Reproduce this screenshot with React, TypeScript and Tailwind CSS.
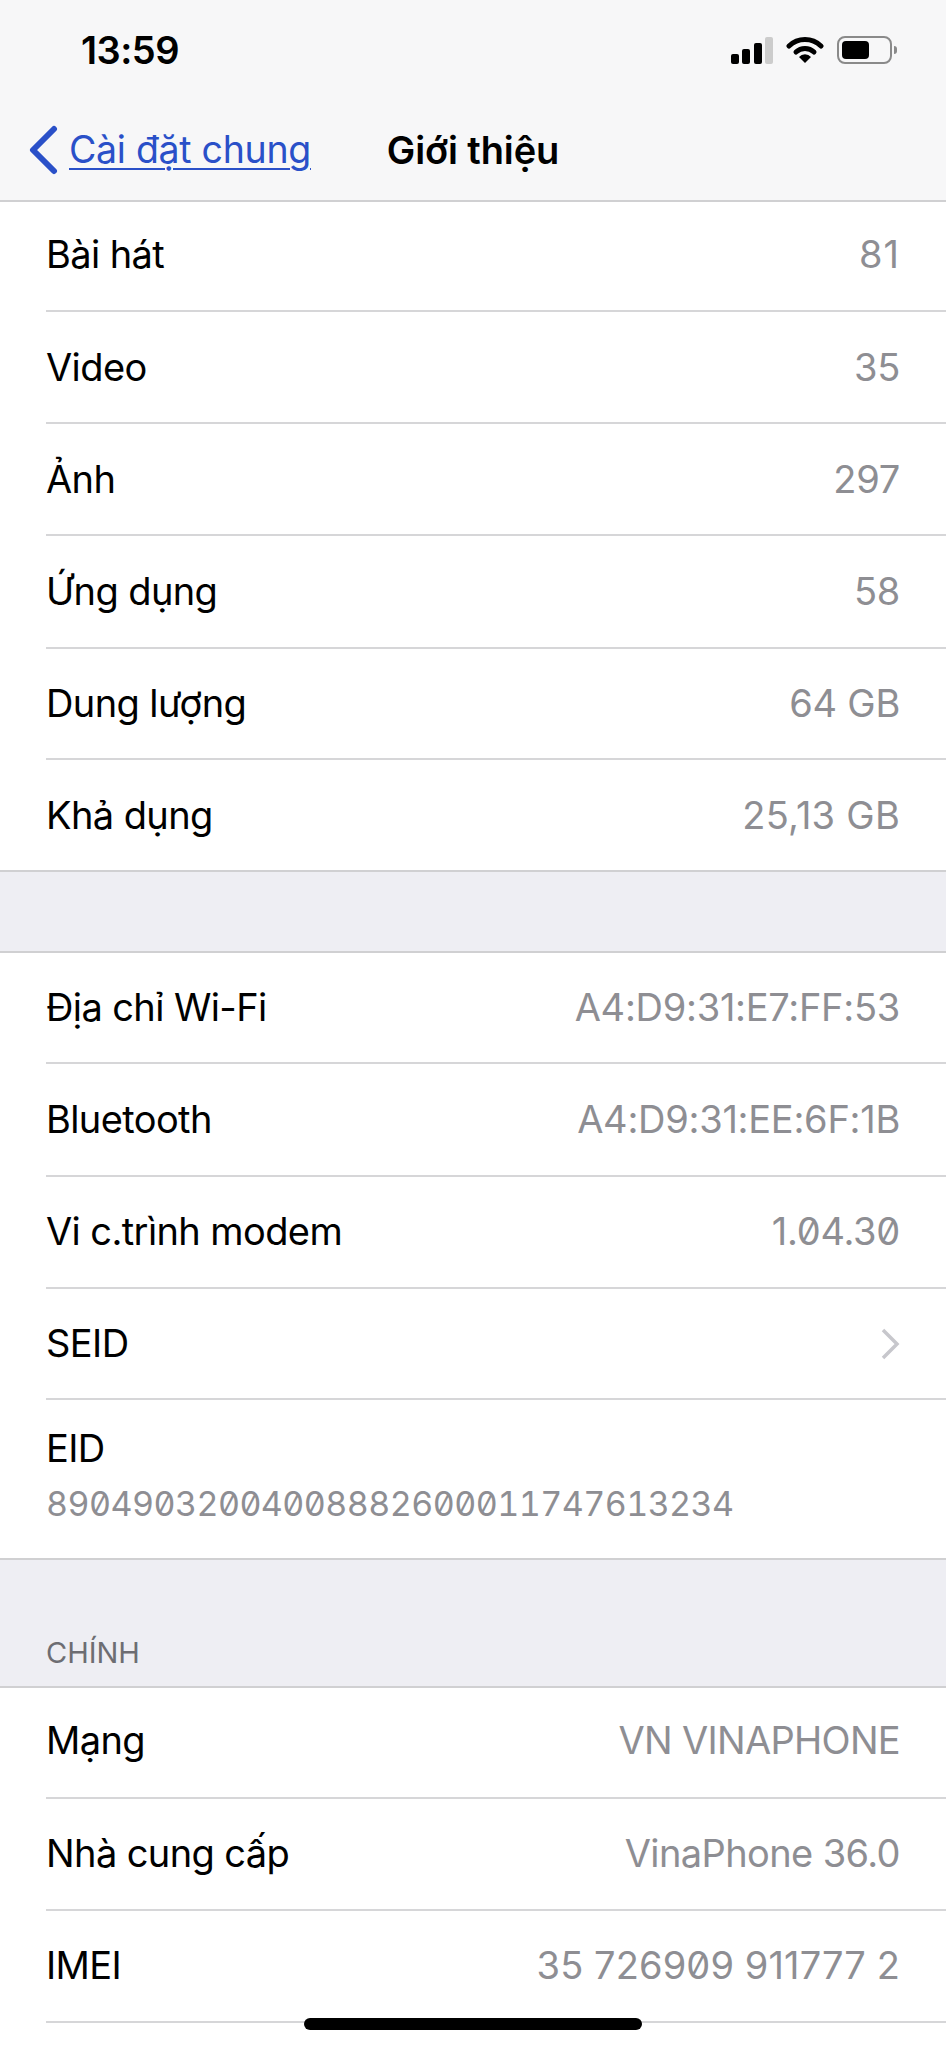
import React from 'react';

interface RowProps {
  label: string;
  value?: string;
  height: string;
  last?: boolean;
  chevron?: boolean;
  plainZero?: boolean;
  textPad?: string;
  valueClass?: string;
}

function Row({ label, value, height, last, chevron, plainZero, textPad = '', valueClass = 'tracking-[-0.27px]' }: RowProps) {
  return (
    <div className={`pl-[46px] ${height}`}>
      <div className={`flex h-full items-center justify-between pr-[46px] ${textPad} ${last ? '' : 'border-b-2 border-[#d6d6d8]'}`}>
        <span className="text-[38px] tracking-[-0.6px] text-black">{label}</span>
        {value && <span className={`text-[38px] text-[#8e8e93] ${valueClass} ${plainZero ? '' : 'slashed-zero'}`}>{value}</span>}
        {chevron && (
          <svg width="20" height="32" viewBox="0 0 20 32">
            <path d="M3 2 L17 16 L3 30" fill="none" stroke="#c7c7cc" strokeWidth="3.5" />
          </svg>
        )}
      </div>
    </div>
  );
}

function StatusIcons() {
  return (
    <div className="flex items-center">
      <svg width="42" height="28" viewBox="0 0 42 28" className="mr-[13px]">
        <rect x="0" y="18" width="8" height="10" rx="2" fill="#000" />
        <rect x="11" y="13" width="8" height="15" rx="2" fill="#000" />
        <rect x="23" y="7" width="8" height="21" rx="2" fill="#000" />
        <rect x="34" y="1" width="8" height="27" rx="2" fill="#cccccc" />
      </svg>
      <svg width="38" height="28" viewBox="0 0 38 28" className="mr-[13px]">
        <path d="M3 10 A23 23 0 0 1 35 10" fill="none" stroke="#000" strokeWidth="5" strokeLinecap="round" />
        <path d="M10 16 A13 13 0 0 1 28 16" fill="none" stroke="#000" strokeWidth="5" strokeLinecap="round" />
        <path d="M19 27 L13 21 A8 8 0 0 1 25 21 Z" fill="#000" />
      </svg>
      <div className="flex items-center">
        <div className="flex h-[28px] w-[55px] items-center rounded-[8px] border-2 border-[#8a8a8a] p-[3px]">
          <div className="h-full w-[27px] rounded-[4px] bg-black" />
        </div>
        <div className="ml-[2px] h-[8px] w-[3px] rounded-r-full bg-[#8a8a8a]" />
      </div>
    </div>
  );
}

export default function App() {
  return (
    <div className="relative h-[2048px] w-[946px] overflow-hidden bg-white font-['Inter','Noto_Sans',sans-serif]">
      <div className="h-[202px] border-b-2 border-[#d0d0d2] bg-[#f7f7f8]">
        <div className="flex h-[100px] items-center justify-between pl-[81px] pr-[49px]">
          <span className="text-[38px] font-semibold leading-[40px] tracking-[-0.5px] text-black">13:59</span>
          <StatusIcons />
        </div>
        <div className="grid h-[100px] grid-cols-[1fr_auto_1fr] items-center">
          <div className="flex items-center pl-[28px]">
            <svg width="30" height="50" viewBox="0 0 30 50" className="mr-[11px]">
              <path d="M26 4 L5 25 L26 46" fill="none" stroke="#2a50c8" strokeWidth="6" strokeLinecap="round" strokeLinejoin="round" />
            </svg>
            <span className="text-[37.5px] tracking-[-0.3px] text-[#2a50c8] underline decoration-2 underline-offset-[5px]">Cài đặt chung</span>
          </div>
          <span className="text-[38px] font-semibold tracking-[-0.1px] text-black">Giới thiệu</span>
          <div />
        </div>
      </div>

      <Row label="Bài hát" value="81" height="h-[110px]" textPad="pb-[4px]" valueClass="tracking-[1px]" />
      <Row label="Video" value="35" height="h-[112px]" />
      <Row label="Ảnh" value="297" height="h-[112px]" />
      <Row label="Ứng dụng" value="58" height="h-[113px]" />
      <Row label="Dung lượng" value="64 GB" height="h-[111px]" />
      <Row label="Khả dụng" value="25,13 GB" height="h-[110px]" last valueClass="tracking-[0.25px]" />

      <div className="h-[83px] border-y-2 border-[#d0d0d2] bg-[#eeeef3]" />

      <Row label="Địa chỉ Wi-Fi" value="A4:D9:31:E7:FF:53" height="h-[111px]" />
      <Row label="Bluetooth" value="A4:D9:31:EE:6F:1B" height="h-[113px]" />
      <Row label="Vi c.trình modem" value="1.04.30" height="h-[112px]" textPad="pb-[1px]" />
      <Row label="SEID" height="h-[111px]" chevron />
      <div className="flex h-[158px] flex-col pl-[46px] pt-[26px]">
        <span className="text-[38px] leading-[44px] tracking-[-0.6px] text-black">EID</span>
        <span className="mt-[12px] text-[34px] leading-[44px] tracking-[-0.56px] text-[#8e8e93] slashed-zero tabular-nums">89049032004008882600011747613234</span>
      </div>

      <div className="flex h-[130px] items-end border-y-2 border-[#d0d0d2] bg-[#eeeef3] pb-[17px] pl-[46px]">
        <span className="text-[29px] leading-[32px] text-[#6d6d72]">CHÍNH</span>
      </div>

      <Row label="Mạng" value="VN VINAPHONE" height="h-[111px]" textPad="pb-[4px]" valueClass="tracking-[-0.7px]" />
      <Row label="Nhà cung cấp" value="VinaPhone 36.0" height="h-[112px]" plainZero textPad="pb-[2px]" valueClass="tracking-[-0.6px]" />
      <Row label="IMEI" value="35 726909 911777 2" height="h-[112px]" textPad="pb-[2px]" valueClass="tracking-[0.1px]" />

      <div className="absolute left-[304px] top-[2018px] h-[12px] w-[338px] rounded-[6px] bg-black" />
    </div>
  );
}
